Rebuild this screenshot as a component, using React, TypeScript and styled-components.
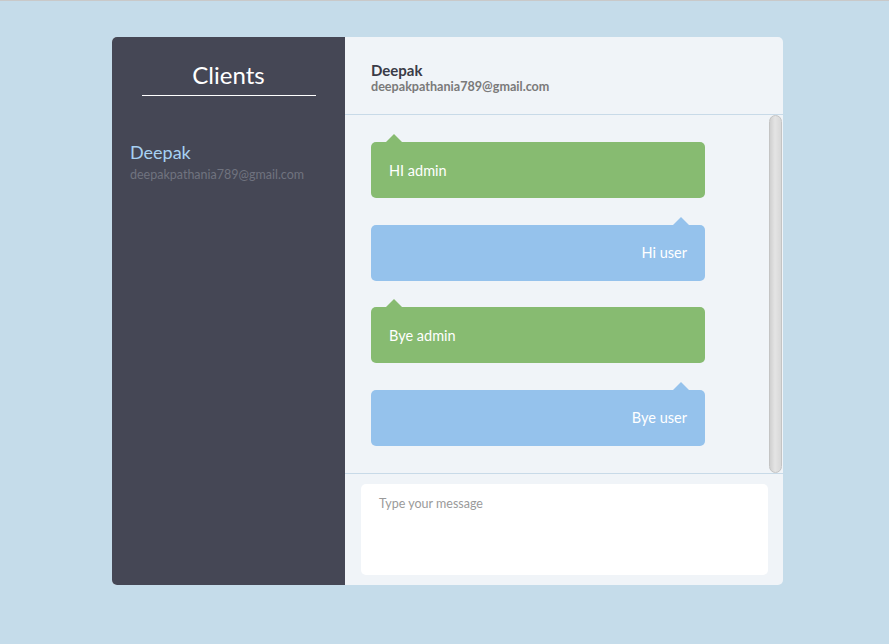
import React from "react";
import styled, { createGlobalStyle } from "styled-components";

const Global = createGlobalStyle`
  html, body {
    margin: 0;
    padding: 0;
    background: #c5dcea;
    font-family: Lato, "Open Sans", sans-serif;
  }
  body {
    border-top: 1px solid #c9c9c9;
    min-height: 643px;
  }
`;

const Page = styled.div`
  padding: 36px 0 0 112px;
`;

const Card = styled.div`
  width: 671px;
  height: 548px;
  display: grid;
  grid-template-columns: 233px 1fr;
  border-radius: 5px;
  overflow: hidden;
  background: #f0f4f8;
`;

const Sidebar = styled.aside`
  background: #454755;
  display: flex;
  flex-direction: column;
`;

const SideTitle = styled.h2`
  margin: 23px auto 0;
  width: 174px;
  text-align: center;
  font-size: 24px;
  font-weight: 400;
  line-height: 29px;
  color: #ffffff;
  padding-bottom: 6px;
  border-bottom: 1px solid #ffffff;
`;

const ClientItem = styled.div`
  padding: 45px 18px 0;
  display: flex;
  flex-direction: column;
`;

const ClientName = styled.div`
  font-size: 18px;
  line-height: 22px;
  color: #a7d1f3;
`;

const ClientEmail = styled.div`
  margin-top: 4px;
  font-size: 12.5px;
  line-height: 16px;
  color: #70737f;
`;

const Main = styled.section`
  display: flex;
  flex-direction: column;
  min-width: 0;
`;

const Header = styled.header`
  height: 78px;
  box-sizing: border-box;
  padding: 4px 26px 0;
  display: flex;
  flex-direction: column;
  justify-content: center;
  border-bottom: 1px solid #c8dae8;
`;

const HeaderName = styled.div`
  font-size: 15px;
  font-weight: 700;
  line-height: 18px;
  color: #3a3b47;
`;

const HeaderEmail = styled.div`
  font-size: 12.6px;
  font-weight: 700;
  line-height: 16px;
  color: #7a7a7a;
`;

const MessagesArea = styled.div`
  height: 359px;
  box-sizing: border-box;
  border-bottom: 1px solid #c8dae8;
  display: flex;
`;

const MessageList = styled.div`
  flex: 1;
  overflow: hidden;
  padding: 27px 64px 0 26px;
  display: flex;
  flex-direction: column;
  gap: 26.5px;
`;

const Rail = styled.div`
  flex: 0 0 14px;
  display: flex;
  padding: 0 1px 0 0;
  box-sizing: border-box;
`;

const Thumb = styled.div`
  flex: 1;
  border-radius: 7px;
  border: 1px solid #c4c4c4;
  background: linear-gradient(to right, #d0d0d0, #e4e4e4 45%, #d8d8d8);
`;

const Bubble = styled.div<{ $mine: boolean }>`
  position: relative;
  flex: 0 0 56px;
  box-sizing: border-box;
  border-radius: 5px;
  display: flex;
  align-items: center;
  justify-content: ${(p) => (p.$mine ? "flex-end" : "flex-start")};
  padding: 0 18px;
  font-size: 14.5px;
  color: #ffffff;
  background: ${(p) => (p.$mine ? "#95c2ec" : "#87bb71")};

  &::before {
    content: "";
    position: absolute;
    top: -8px;
    ${(p) => (p.$mine ? "right: 16px;" : "left: 15px;")}
    border-left: 8px solid transparent;
    border-right: 8px solid transparent;
    border-bottom: 8px solid ${(p) => (p.$mine ? "#95c2ec" : "#87bb71")};
  }
`;

const Composer = styled.div`
  flex: 1;
  padding: 10px 15px 10px 16px;
  display: flex;
`;

const Input = styled.textarea`
  flex: 1;
  border: none;
  outline: none;
  resize: none;
  border-radius: 5px;
  background: #ffffff;
  padding: 12px 18px;
  font-family: Lato, "Open Sans", sans-serif;
  font-size: 12.5px;
  line-height: 16px;
  color: #333;
  &::placeholder {
    color: #9a9a9a;
  }
`;

const messages = [
  { text: "HI admin", mine: false },
  { text: "Hi user", mine: true },
  { text: "Bye admin", mine: false },
  { text: "Bye user", mine: true },
];

export default function App() {
  return (
    <>
      <Global />
      <Page>
        <Card>
          <Sidebar>
            <SideTitle>Clients</SideTitle>
            <ClientItem>
              <ClientName>Deepak</ClientName>
              <ClientEmail>deepakpathania789@gmail.com</ClientEmail>
            </ClientItem>
          </Sidebar>
          <Main>
            <Header>
              <HeaderName>Deepak</HeaderName>
              <HeaderEmail>deepakpathania789@gmail.com</HeaderEmail>
            </Header>
            <MessagesArea>
              <MessageList>
                {messages.map((m, i) => (
                  <Bubble key={i} $mine={m.mine}>
                    {m.text}
                  </Bubble>
                ))}
              </MessageList>
              <Rail>
                <Thumb />
              </Rail>
            </MessagesArea>
            <Composer>
              <Input placeholder="Type your message" />
            </Composer>
          </Main>
        </Card>
      </Page>
    </>
  );
}
